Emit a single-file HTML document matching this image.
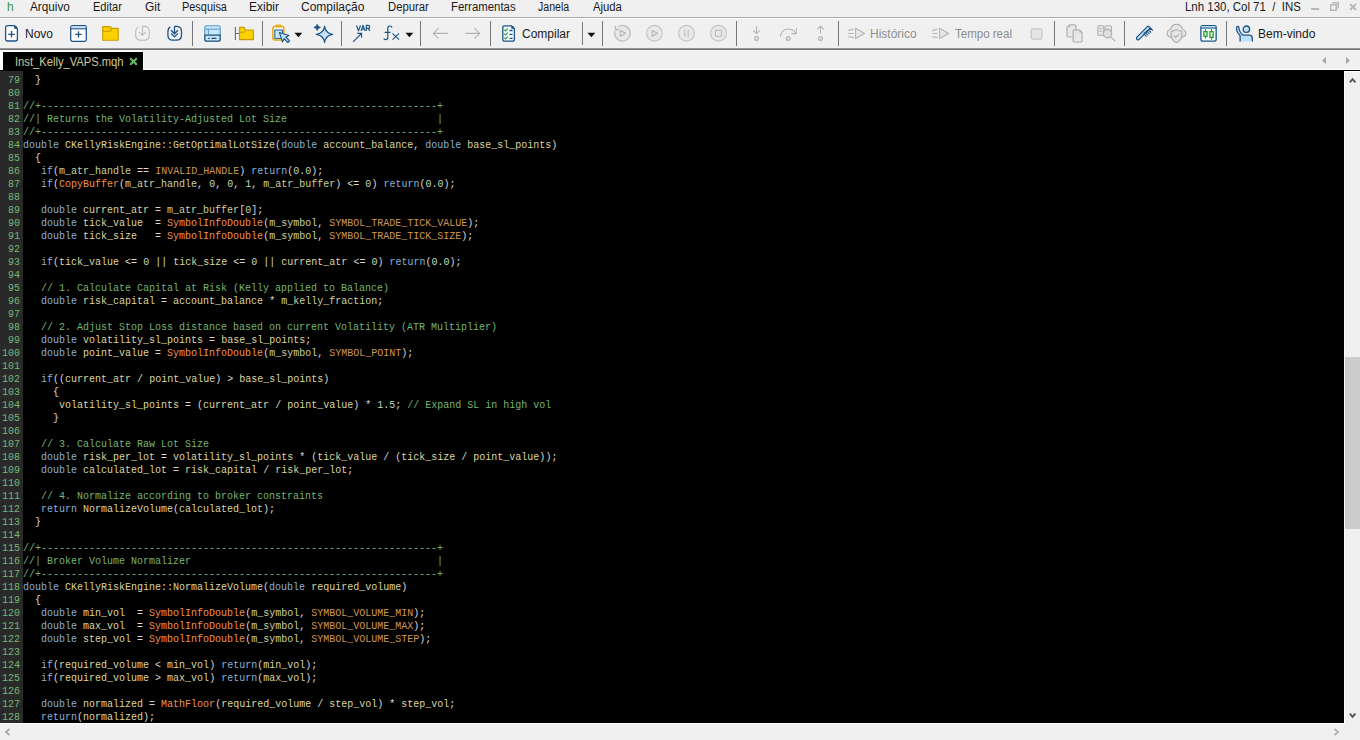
<!DOCTYPE html>
<html><head><meta charset="utf-8">
<style>
*{margin:0;padding:0;box-sizing:border-box}
html,body{width:1360px;height:740px;overflow:hidden;background:#f0f0f0;font-family:"Liberation Sans",sans-serif}
.a{position:absolute}
.t{position:absolute;font-size:12px;line-height:14px;color:#1a1a1a;white-space:pre}
.sep{position:absolute;top:21px;width:1px;height:25px;background:#767676}
svg{position:absolute;overflow:visible}
#ed{position:absolute;left:0;top:70px;width:1344px;height:653px;background:#000;overflow:hidden}
#gut{position:absolute;left:0;top:71px;width:23px;height:652px;background:#2a292a}
.ln,.gn{position:absolute;font-family:"Liberation Mono",monospace;font-size:10px;line-height:13px;white-space:pre}
.ln{left:23px}
.gn{left:0;width:20px;text-align:right;color:#76b676}
i{font-style:normal}
.k{color:#86b2dc}
.f{color:#f09448}
.n{color:#d09852}
.v{color:#dcd6a2}
.m{color:#cad2a0}
.d{color:#bcdcc0}
.p{color:#d8d8d8}
.c{color:#74b474}
</style></head><body>
<!-- menu bar -->
<div class="a" style="left:0;top:17px;width:1360px;height:1px;background:#a8a8a8"></div>
<div class="a" style="left:0;top:18px;width:1360px;height:1px;background:#fff"></div>
<div class="t" style="left:7px;top:0;color:#3a9a3a">h</div>
<div class="t" style="left:29.5px;top:0;transform:scaleX(0.98);transform-origin:0 0">Arquivo</div>
<div class="t" style="left:93px;top:0;transform:scaleX(0.92);transform-origin:0 0">Editar</div>
<div class="t" style="left:145px;top:0">Git</div>
<div class="t" style="left:182px;top:0;transform:scaleX(0.91);transform-origin:0 0">Pesquisa</div>
<div class="t" style="left:249px;top:0">Exibir</div>
<div class="t" style="left:301px;top:0">Compilação</div>
<div class="t" style="left:387.5px;top:0;transform:scaleX(0.94);transform-origin:0 0">Depurar</div>
<div class="t" style="left:451px;top:0;transform:scaleX(0.95);transform-origin:0 0">Ferramentas</div>
<div class="t" style="left:538px;top:0;transform:scaleX(0.88);transform-origin:0 0">Janela</div>
<div class="t" style="left:592.5px;top:0;transform:scaleX(0.94);transform-origin:0 0">Ajuda</div>
<div class="t" style="left:1185px;top:0;transform:scaleX(0.954);transform-origin:0 0">Lnh 130, Col 71  /  INS</div>
<!-- window controls -->
<div class="a" style="left:1311px;top:8px;width:8px;height:2px;background:#b8b8b8"></div>
<svg style="left:1330px;top:2px" width="9" height="9"><rect x="0.75" y="2.75" width="5.5" height="5.5" fill="none" stroke="#b8b8b8" stroke-width="1.5"/><path d="M2.5 0.75H8.25V6.5" fill="none" stroke="#b8b8b8" stroke-width="1.5"/></svg>
<svg style="left:1349px;top:3px" width="8" height="8"><path d="M1 1L7 7M7 1L1 7" stroke="#b8b8b8" stroke-width="1.8"/></svg>

<!-- toolbar -->
<div class="a" style="left:0;top:48px;width:1360px;height:1px;background:#999"></div>
<div class="a" style="left:0;top:49px;width:1360px;height:1px;background:#6e6e6e"></div>
<div class="a" style="left:0;top:50px;width:1360px;height:1px;background:#fafafa"></div>
<div class="a" style="left:0;top:51px;width:144px;height:1px;background:#fff"></div>
<!-- new file -->
<svg style="left:4px;top:24px" width="16" height="19" viewBox="0 0 16 19"><path d="M3.6 1.6H10.2L13.4 4.8V15Q13.4 17 11.4 17H3.6Q1.6 17 1.6 15V3.6Q1.6 1.6 3.6 1.6Z" fill="#fff" stroke="#1d5487" stroke-width="1.3"/><path d="M10 1.6Q13.4 1.6 13.4 5L10.3 4.8Z" fill="#1d5487"/><path d="M7.5 7V13.6M4.2 10.3H10.8" stroke="#1d5487" stroke-width="1.3"/></svg>
<!-- new window -->
<svg style="left:69px;top:24px" width="19" height="19" viewBox="0 0 19 19"><rect x="1.7" y="1.7" width="15.6" height="15.6" rx="1.8" fill="#fff" stroke="#1d5487" stroke-width="1.3"/><path d="M2.3 2.6H16.7V4.2H2.3Z" fill="#bfe0f8"/><path d="M1.7 4.8H17.3" stroke="#1d5487" stroke-width="1.1"/><path d="M9.5 7.2V13.6M6.3 10.4H12.7" stroke="#1d5487" stroke-width="1.3"/></svg>
<!-- folder -->
<svg style="left:101px;top:25px" width="20" height="17" viewBox="0 0 20 17"><path d="M1.7 1.6H8.4Q10.3 1.6 10.3 3.4H17.2V15.2H1.7Z" fill="#fdd000" stroke="#c69a00" stroke-width="1.1" stroke-linejoin="round"/><path d="M1.7 6.3H8.4Q10.3 6.3 10.3 4.6V3.4" fill="none" stroke="#c69a00" stroke-width="1.1"/></svg>
<!-- download disabled -->
<svg style="left:134px;top:25px" width="18" height="17" viewBox="0 0 18 17"><path d="M4 1.9Q1.7 3.3 1.7 7V10Q1.7 15.2 6.7 15.2H10.3Q15.3 15.2 15.3 10V6.5Q15.3 1.4 10.3 1.4H8.5V10.3M5.1 7L8.5 10.4L11.9 7" fill="none" stroke="#bdbdbd" stroke-width="1.1" stroke-linejoin="round"/></svg>
<!-- download blue -->
<svg style="left:166px;top:25px" width="18" height="17" viewBox="0 0 18 17"><path d="M4.3 1.9Q1.9 3.3 1.9 7V10Q1.9 15.2 6.9 15.2H10.3Q15.5 15.2 15.5 10V6.5Q15.5 1.4 10.3 1.4H8.5V8.5M5 5.3L8.5 8.7L12 5.3M5 8.4L8.5 11.8L12 8.4" fill="none" stroke="#1d5487" stroke-width="1.3" stroke-linejoin="round"/></svg>
<div class="sep" style="left:192px"></div>
<!-- panel -->
<svg style="left:203px;top:24px" width="19" height="19" viewBox="0 0 19 19"><path d="M1.8 11.2V3.6Q1.8 1.7 3.7 1.7H15.3Q17.2 1.7 17.2 3.6V11.2" fill="#c6e6fb" stroke="#5a9acb" stroke-width="1.1"/><path d="M1.8 11.2V15.3Q1.8 17.2 3.7 17.2H15.3Q17.2 17.2 17.2 15.3V11.2Z" fill="#c6e6fb" stroke="#1e4f7a" stroke-width="1.3"/><path d="M1.8 5.2H17.2M5.4 5.2V11" stroke="#5a9acb" stroke-width="1"/><path d="M5.2 14.4H6.6M8.4 14.4H13.4" stroke="#1e4f7a" stroke-width="1.3"/></svg>
<!-- folder with tree -->
<svg style="left:233px;top:25px" width="22" height="17" viewBox="0 0 22 17"><path d="M2.4 2V15M2.4 8.5H6.5" stroke="#6a6a7a" stroke-width="1.1"/><path d="M6.6 2.4H10.3Q12 2.4 12 4.3V5H20.4V14.6H6.6Z" fill="#fdd000" stroke="#c69a00" stroke-width="1.1"/><path d="M6.6 7.3H10.6Q12 7.3 12 5.5" fill="none" stroke="#c69a00" stroke-width="1.1"/></svg>
<div class="sep" style="left:262px"></div>
<!-- clipboard + cursor -->
<svg style="left:271px;top:24px" width="22" height="20" viewBox="0 0 22 20"><rect x="1.9" y="2.6" width="11" height="13.3" rx="1.8" fill="#f5f5f5" stroke="#e5aa10" stroke-width="1.5"/><path d="M4.6 2.8V2Q4.6 1.1 5.5 1.1H9.3Q10.2 1.1 10.2 2V2.8Z" fill="#f5c030" stroke="#e5aa10" stroke-width="1"/><rect x="3.8" y="6" width="7.6" height="8.4" fill="#c2e2f8" stroke="#1d5487" stroke-width="0.9"/><path d="M8.4 8.4L18 11.4L14.8 13L18.6 16.8L16.9 18.5L13.1 14.7L11.5 17.9Z" fill="#c2e2f8" stroke="#1d5487" stroke-width="1.1" stroke-linejoin="round"/></svg>
<svg style="left:294px;top:32px" width="9" height="6"><path d="M0.5 0.8H8.3L4.4 5.2Z" fill="#111"/></svg>
<!-- sparkle -->
<svg style="left:313px;top:23px" width="21" height="21" viewBox="0 0 21 21"><path d="M11.6 3.4Q12.5 10.4 19.7 11.4Q12.5 12.5 11.6 19.5Q10.7 12.5 3.2 11.4Q10.7 10.4 11.6 3.4Z" fill="#c2e2f8" stroke="#1d5487" stroke-width="1.25" stroke-linejoin="round"/><path d="M4.2 1.2Q4.6 3.9 7.5 4.4Q4.6 4.9 4.2 7.6Q3.8 4.9 0.9 4.4Q3.8 3.9 4.2 1.2Z" fill="#1d5487" stroke="#1d5487" stroke-width="0.7" stroke-linejoin="round"/></svg>
<div class="sep" style="left:341px"></div>
<!-- VAR + fx -->
<svg style="left:344px;top:20px" width="62" height="26" viewBox="0 0 62 26"><path d="M12.5 5.4L14.5 10.9L16.5 5.4M17 10.9L19 5.4L21 10.9M17.8 9.2H20.2M22.3 10.9V5.4H24.2Q25.7 5.4 25.7 6.9Q25.7 8.3 24.2 8.3H22.3M24.2 8.3L25.9 10.9" fill="none" stroke="#1d5487" stroke-width="1.2" stroke-linejoin="round"/><path d="M9.1 21.8L17.5 13.5M13.2 13.4H17.6V17.7" fill="none" stroke="#1d5487" stroke-width="1.1"/><path d="M48 7.6Q47.6 6 46 6Q43.8 6 43.8 8.6V17.3Q43.8 19.6 41.7 19.6Q40.2 19.6 39.6 18.5M40.6 12.4H46.5" fill="none" stroke="#1d5487" stroke-width="1.2"/><path d="M48.5 13.4L55 19.7M55 13.4L48.5 19.7" stroke="#1d5487" stroke-width="1.1"/></svg>
<svg style="left:405px;top:32px" width="9" height="6"><path d="M0.5 0.8H8.3L4.4 5.2Z" fill="#111"/></svg>
<div class="sep" style="left:420px"></div>
<!-- arrows -->
<svg style="left:432px;top:27px" width="17" height="13" viewBox="0 0 17 13"><path d="M15.8 6.4H1.5M6.6 1.1L1.3 6.4L6.6 11.7" fill="none" stroke="#b3b3b3" stroke-width="1.1"/></svg>
<svg style="left:464px;top:27px" width="17" height="13" viewBox="0 0 17 13"><path d="M1.2 6.4H15.5M10.4 1.1L15.7 6.4L10.4 11.7" fill="none" stroke="#b3b3b3" stroke-width="1.1"/></svg>
<div class="sep" style="left:490px"></div>
<!-- compile -->
<svg style="left:501px;top:24px" width="16" height="19" viewBox="0 0 16 19"><path d="M3.6 1.8H10.4L13.4 4.8V15.2Q13.4 17.2 11.4 17.2H3.6Q1.8 17.2 1.8 15.2V3.8Q1.8 1.8 3.6 1.8Z" fill="#f4fbff" stroke="#1d5487" stroke-width="1.3"/><path d="M10.2 1.8Q13.4 1.8 13.4 5L10.4 4.8Z" fill="#1d5487"/><path d="M3.2 5.6L4.6 7L6.8 4.6M3.2 9.6L4.6 11L6.8 8.6M3.2 13.6L4.6 15L6.8 12.6" fill="none" stroke="#3c9c48" stroke-width="1.2"/><path d="M8.5 6.5H11.6M8.5 10.4H11.6M8.5 14.4H11.6" stroke="#1d5487" stroke-width="1.3"/></svg>
<div class="sep" style="left:582px;top:22px;height:23px;background:#7a7a7a"></div>
<svg style="left:587px;top:32px" width="9" height="6"><path d="M0.5 0.8H8.3L4.4 5.2Z" fill="#111"/></svg>
<div class="sep" style="left:602px"></div>
<!-- debug circles -->
<svg style="left:612px;top:23px" width="21" height="21" viewBox="0 0 21 21"><circle cx="10.5" cy="10.25" r="7.8" fill="#e8e8e8"/><path d="M6.03 3.86A7.8 7.8 0 1 1 2.97 8.23" fill="none" stroke="#bdbdbd" stroke-width="1.2"/><path d="M3.4 3V6.5H6.9" fill="none" stroke="#b5b5b5" stroke-width="1.3"/><path d="M8.3 7.4V13.3L13.6 10.3Z" fill="none" stroke="#b5b5b5" stroke-width="1.1" stroke-linejoin="round"/></svg>
<svg style="left:644px;top:23px" width="21" height="21" viewBox="0 0 21 21"><circle cx="10.4" cy="10.3" r="7.9" fill="#e8e8e8" stroke="#c6c6c6" stroke-width="1.2"/><path d="M8.2 7.4V13.3L13.5 10.3Z" fill="none" stroke="#b5b5b5" stroke-width="1.1" stroke-linejoin="round"/></svg>
<svg style="left:676px;top:23px" width="21" height="21" viewBox="0 0 21 21"><circle cx="10.5" cy="10.3" r="7.9" fill="#e8e8e8" stroke="#c6c6c6" stroke-width="1.2"/><path d="M8.8 6.8V13.8M12.2 6.8V13.8" stroke="#bdbdbd" stroke-width="1.1"/></svg>
<svg style="left:708px;top:23px" width="21" height="21" viewBox="0 0 21 21"><circle cx="10.5" cy="10.3" r="7.9" fill="#e8e8e8" stroke="#c6c6c6" stroke-width="1.2"/><rect x="7.5" y="7.3" width="6" height="6" fill="none" stroke="#bdbdbd" stroke-width="1.1"/></svg>
<div class="sep" style="left:736px"></div>
<!-- step into/over/out -->
<svg style="left:748px;top:24px" width="17" height="19" viewBox="0 0 17 19"><path d="M8.5 2V9.5M5.3 6.5L8.5 9.6L11.7 6.5" fill="none" stroke="#b5b5b5" stroke-width="1.1"/><circle cx="8.5" cy="14.5" r="1.9" fill="#e6e6e6" stroke="#b5b5b5" stroke-width="1.2"/></svg>
<svg style="left:778px;top:24px" width="21" height="19" viewBox="0 0 21 19"><path d="M2.2 12.5Q4 5 10 5Q15 5 17.7 9M18.3 4.3V9.6H13.3" fill="none" stroke="#b5b5b5" stroke-width="1.1"/><circle cx="10.3" cy="14.5" r="1.9" fill="#e6e6e6" stroke="#b5b5b5" stroke-width="1.2"/></svg>
<svg style="left:812px;top:24px" width="17" height="19" viewBox="0 0 17 19"><path d="M8.5 9.7V2.2M5.3 5.3L8.5 2.1L11.7 5.3" fill="none" stroke="#b5b5b5" stroke-width="1.1"/><circle cx="8.5" cy="14.5" r="1.9" fill="#e6e6e6" stroke="#b5b5b5" stroke-width="1.2"/></svg>
<div class="sep" style="left:838px"></div>
<!-- historico / tempo real icons -->
<svg style="left:847px;top:27px" width="19" height="13" viewBox="0 0 19 13"><path d="M1.2 3.6L6.6 2.1M1.2 6.5H6.6M1.2 9.6L6.6 10.6" stroke="#b8b8b8" stroke-width="1.1"/><path d="M8.6 1.3V11.5L17.6 6.4Z" fill="#e6e6e6" stroke="#b5b5b5" stroke-width="1.1" stroke-linejoin="round"/></svg>
<svg style="left:931px;top:27px" width="19" height="13" viewBox="0 0 19 13"><path d="M1.2 3.6L6.6 2.1M1.2 6.5H6.6M1.2 9.6L6.6 10.6" stroke="#b8b8b8" stroke-width="1.1"/><path d="M8.6 1.3V11.5L17.6 6.4Z" fill="#e6e6e6" stroke="#b5b5b5" stroke-width="1.1" stroke-linejoin="round"/></svg>
<svg style="left:1030px;top:28px" width="13" height="12" viewBox="0 0 13 12"><rect x="1.2" y="0.8" width="10.6" height="10.3" rx="1.5" fill="#e4e4e4" stroke="#c6c6c6" stroke-width="1.2"/></svg>
<div class="sep" style="left:1054px"></div>
<!-- copy docs -->
<svg style="left:1065px;top:23px" width="20" height="21" viewBox="0 0 20 21"><path d="M4.6 1.8H9.6Q10.9 1.8 10.9 3.1V12.7Q10.9 14 9.6 14H3.3Q2 14 2 12.7V4.4Z" fill="#e8e8e8" stroke="#b0b0b0" stroke-width="1.2" stroke-linejoin="round"/><path d="M4.6 1.8V4.4H2Z" fill="#b0b0b0"/><path d="M9.4 6.8H14.4L17 9.4V17.7Q17 19 15.7 19H9.4Q8.1 19 8.1 17.7V8.1Q8.1 6.8 9.4 6.8Z" fill="#e8e8e8" fill-opacity="0.85" stroke="#b0b0b0" stroke-width="1.2" stroke-linejoin="round"/><path d="M14.4 6.8V9.4H17Z" fill="#b0b0b0"/></svg>
<!-- search -->
<svg style="left:1096px;top:24px" width="21" height="19" viewBox="0 0 21 19"><rect x="1.8" y="1.8" width="6" height="9.4" rx="1" fill="#e8e8e8" stroke="#b0b0b0" stroke-width="1.1"/><rect x="9" y="1.8" width="6.4" height="5.8" rx="1" fill="#e8e8e8" stroke="#b0b0b0" stroke-width="1.1"/><path d="M3.2 4.6H5.8M3.2 7.3H5.8" stroke="#b0b0b0" stroke-width="1"/><circle cx="11.5" cy="9.6" r="4.2" fill="#e0e0e0" stroke="#b0b0b0" stroke-width="1.2"/><path d="M14.5 12.6L19.3 17.4" stroke="#b0b0b0" stroke-width="1.1"/></svg>
<div class="sep" style="left:1124px"></div>
<!-- comb -->
<svg style="left:1135px;top:25px" width="19" height="16" viewBox="0 0 19 16"><path d="M1.6 12.4L12.6 1.4Q13.1 0.9 13.6 1.4L15.4 3.2L3.9 14.6Q2.9 15.3 2 14.5Q1.1 13.4 1.6 12.4Z" fill="#b8e0fb" stroke="#1d4f7c" stroke-width="1.2" stroke-linejoin="round"/><path d="M8.6 8.8L15.6 3.3L17.8 5.5M9.6 9.6L11.6 11.6M11.1 8.3L13.1 10.1M12.6 7.1L14.6 8.9M14.1 5.9L16.2 7.5" fill="none" stroke="#1d4f7c" stroke-width="1.1"/></svg>
<!-- cloud shield -->
<svg style="left:1166px;top:23px" width="21" height="21" viewBox="0 0 21 21"><path d="M6 14.3Q1.2 14.3 1.2 10.3Q1.2 7 4.6 6.5Q5.5 1.4 10.5 1.4Q15.5 1.4 16.4 6.5Q19.8 7 19.8 10.3Q19.8 14.3 15 14.3" fill="#e6e6e6" stroke="#b0b0b0" stroke-width="1.2"/><path d="M10.5 6.8L15.8 8.6V12.5Q15.8 17.3 10.5 19.6Q5.2 17.3 5.2 12.5V8.6Z" fill="#e6e6e6" stroke="#b0b0b0" stroke-width="1.2"/><path d="M7.8 12.5L9.8 14.5L13.3 10.9" fill="none" stroke="#b0b0b0" stroke-width="1.2"/></svg>
<!-- candles -->
<svg style="left:1199px;top:24px" width="19" height="19" viewBox="0 0 19 19"><rect x="1.9" y="1.65" width="15.25" height="15.5" rx="1.6" fill="#f4fcff" stroke="#1d5487" stroke-width="1.3"/><path d="M2.5 2.3H16.5V3.5H2.5Z" fill="#bfe6f8"/><path d="M1.9 4H17.15" stroke="#1d5487" stroke-width="1.1"/><path d="M6.5 5.1V14.6M12.55 5.1V15.8" stroke="#2a9a2a" stroke-width="1.1"/><rect x="4.9" y="7.6" width="3.2" height="4.7" fill="#c8f6c8" stroke="#2a9a2a" stroke-width="1.2"/><rect x="10.9" y="7.6" width="3.3" height="5.8" fill="#c8f6c8" stroke="#2a9a2a" stroke-width="1.2"/></svg>
<div class="sep" style="left:1226px"></div>
<!-- person waving -->
<svg style="left:1235px;top:24px" width="20" height="19" viewBox="0 0 20 19"><path d="M5.1 17.6V11.5Q1.3 8.3 1.5 3.6Q1.9 2 3.6 2.5Q4.6 9.4 8.2 11.1H14.3Q17.3 11.1 17.3 14V17.6Z" fill="#bfe0f8"/><path d="M5.1 17.6V11.5Q1.3 8.3 1.5 3.6Q1.9 2 3.6 2.5Q4.6 9.4 8.2 11.1H14.3Q17.3 11.1 17.3 14V17.6" fill="none" stroke="#1d5487" stroke-width="1.3" stroke-linejoin="round"/><circle cx="11.4" cy="5.2" r="3.2" fill="#bfe0f8" stroke="#1d5487" stroke-width="1.3"/></svg>

<div class="t" style="left:25px;top:27px">Novo</div>
<div class="t" style="left:522px;top:27px">Compilar</div>
<div class="t" style="left:870px;top:27px;color:#8e8e8e">Histórico</div>
<div class="t" style="left:955px;top:27px;color:#8e8e8e;transform:scaleX(0.96);transform-origin:0 0">Tempo real</div>
<div class="t" style="left:1258px;top:27px">Bem-vindo</div>

<!-- tab strip -->
<div class="a" style="left:0;top:52px;width:3px;height:18px;background:#fff"></div>
<div class="a" style="left:3px;top:52px;width:140px;height:18px;background:#000"></div>
<div class="a" style="left:143px;top:52px;width:1px;height:18px;background:#fff"></div>
<div class="a" style="left:144px;top:69px;width:1216px;height:1px;background:#fff"></div>
<div class="t" style="left:14.5px;top:54px;font-size:13px;line-height:15px;color:#cdc998;transform:scaleX(0.86);transform-origin:0 0">Inst_Kelly_VAPS.mqh</div>
<svg style="left:128.5px;top:56.5px" width="9" height="9"><path d="M1.2 1.2L7.8 7.8M7.8 1.2L1.2 7.8" stroke="#6cb86c" stroke-width="2.1"/></svg>
<svg style="left:1322px;top:57px" width="5" height="7"><path d="M4 0L0 3.5L4 7Z" fill="#a8a8a8"/></svg>
<svg style="left:1346px;top:57px" width="5" height="7"><path d="M0 0L4 3.5L0 7Z" fill="#a8a8a8"/></svg>

<!-- editor -->
<div id="ed"></div>
<div id="gut"></div>
<div class="gn" style="top:74px">79</div>
<div class="gn" style="top:87px">80</div>
<div class="gn" style="top:100px">81</div>
<div class="gn" style="top:113px">82</div>
<div class="gn" style="top:126px">83</div>
<div class="gn" style="top:139px">84</div>
<div class="gn" style="top:152px">85</div>
<div class="gn" style="top:165px">86</div>
<div class="gn" style="top:178px">87</div>
<div class="gn" style="top:191px">88</div>
<div class="gn" style="top:204px">89</div>
<div class="gn" style="top:217px">90</div>
<div class="gn" style="top:230px">91</div>
<div class="gn" style="top:243px">92</div>
<div class="gn" style="top:256px">93</div>
<div class="gn" style="top:269px">94</div>
<div class="gn" style="top:282px">95</div>
<div class="gn" style="top:295px">96</div>
<div class="gn" style="top:308px">97</div>
<div class="gn" style="top:321px">98</div>
<div class="gn" style="top:334px">99</div>
<div class="gn" style="top:347px">100</div>
<div class="gn" style="top:360px">101</div>
<div class="gn" style="top:373px">102</div>
<div class="gn" style="top:386px">103</div>
<div class="gn" style="top:399px">104</div>
<div class="gn" style="top:412px">105</div>
<div class="gn" style="top:425px">106</div>
<div class="gn" style="top:438px">107</div>
<div class="gn" style="top:451px">108</div>
<div class="gn" style="top:464px">109</div>
<div class="gn" style="top:477px">110</div>
<div class="gn" style="top:490px">111</div>
<div class="gn" style="top:503px">112</div>
<div class="gn" style="top:516px">113</div>
<div class="gn" style="top:529px">114</div>
<div class="gn" style="top:542px">115</div>
<div class="gn" style="top:555px">116</div>
<div class="gn" style="top:568px">117</div>
<div class="gn" style="top:581px">118</div>
<div class="gn" style="top:594px">119</div>
<div class="gn" style="top:607px">120</div>
<div class="gn" style="top:620px">121</div>
<div class="gn" style="top:633px">122</div>
<div class="gn" style="top:646px">123</div>
<div class="gn" style="top:659px">124</div>
<div class="gn" style="top:672px">125</div>
<div class="gn" style="top:685px">126</div>
<div class="gn" style="top:698px">127</div>
<div class="gn" style="top:711px">128</div>
<div class="ln" style="top:74px">  <i class="p">}</i></div>
<div class="ln" style="top:87px"></div>
<div class="ln" style="top:100px"><i class="c">//+------------------------------------------------------------------+</i></div>
<div class="ln" style="top:113px"><i class="c">//| Returns the Volatility-Adjusted Lot Size                         |</i></div>
<div class="ln" style="top:126px"><i class="c">//+------------------------------------------------------------------+</i></div>
<div class="ln" style="top:139px"><i class="k">double</i> <i class="v">CKellyRiskEngine</i><i class="p">:</i><i class="p">:</i><i class="v">GetOptimalLotSize</i><i class="p">(</i><i class="k">double</i> <i class="v">account_balance</i><i class="p">,</i> <i class="k">double</i> <i class="v">base_sl_points</i><i class="p">)</i></div>
<div class="ln" style="top:152px">  <i class="p">{</i></div>
<div class="ln" style="top:165px">   <i class="k">if</i><i class="p">(</i><i class="m">m_atr_handle</i> <i class="p">=</i><i class="p">=</i> <i class="n">INVALID_HANDLE</i><i class="p">)</i> <i class="k">return</i><i class="p">(</i><i class="d">0.0</i><i class="p">)</i><i class="p">;</i></div>
<div class="ln" style="top:178px">   <i class="k">if</i><i class="p">(</i><i class="f">CopyBuffer</i><i class="p">(</i><i class="m">m_atr_handle</i><i class="p">,</i> <i class="d">0</i><i class="p">,</i> <i class="d">0</i><i class="p">,</i> <i class="d">1</i><i class="p">,</i> <i class="m">m_atr_buffer</i><i class="p">)</i> <i class="p">&lt;</i><i class="p">=</i> <i class="d">0</i><i class="p">)</i> <i class="k">return</i><i class="p">(</i><i class="d">0.0</i><i class="p">)</i><i class="p">;</i></div>
<div class="ln" style="top:191px"></div>
<div class="ln" style="top:204px">   <i class="k">double</i> <i class="v">current_atr</i> <i class="p">=</i> <i class="m">m_atr_buffer</i><i class="p">[</i><i class="d">0</i><i class="p">]</i><i class="p">;</i></div>
<div class="ln" style="top:217px">   <i class="k">double</i> <i class="v">tick_value</i>  <i class="p">=</i> <i class="f">SymbolInfoDouble</i><i class="p">(</i><i class="m">m_symbol</i><i class="p">,</i> <i class="n">SYMBOL_TRADE_TICK_VALUE</i><i class="p">)</i><i class="p">;</i></div>
<div class="ln" style="top:230px">   <i class="k">double</i> <i class="v">tick_size</i>   <i class="p">=</i> <i class="f">SymbolInfoDouble</i><i class="p">(</i><i class="m">m_symbol</i><i class="p">,</i> <i class="n">SYMBOL_TRADE_TICK_SIZE</i><i class="p">)</i><i class="p">;</i></div>
<div class="ln" style="top:243px"></div>
<div class="ln" style="top:256px">   <i class="k">if</i><i class="p">(</i><i class="v">tick_value</i> <i class="p">&lt;</i><i class="p">=</i> <i class="d">0</i> <i class="p">|</i><i class="p">|</i> <i class="v">tick_size</i> <i class="p">&lt;</i><i class="p">=</i> <i class="d">0</i> <i class="p">|</i><i class="p">|</i> <i class="v">current_atr</i> <i class="p">&lt;</i><i class="p">=</i> <i class="d">0</i><i class="p">)</i> <i class="k">return</i><i class="p">(</i><i class="d">0.0</i><i class="p">)</i><i class="p">;</i></div>
<div class="ln" style="top:269px"></div>
<div class="ln" style="top:282px">   <i class="c">// 1. Calculate Capital at Risk (Kelly applied to Balance)</i></div>
<div class="ln" style="top:295px">   <i class="k">double</i> <i class="v">risk_capital</i> <i class="p">=</i> <i class="v">account_balance</i> <i class="p">*</i> <i class="m">m_kelly_fraction</i><i class="p">;</i></div>
<div class="ln" style="top:308px"></div>
<div class="ln" style="top:321px">   <i class="c">// 2. Adjust Stop Loss distance based on current Volatility (ATR Multiplier)</i></div>
<div class="ln" style="top:334px">   <i class="k">double</i> <i class="v">volatility_sl_points</i> <i class="p">=</i> <i class="v">base_sl_points</i><i class="p">;</i></div>
<div class="ln" style="top:347px">   <i class="k">double</i> <i class="v">point_value</i> <i class="p">=</i> <i class="f">SymbolInfoDouble</i><i class="p">(</i><i class="m">m_symbol</i><i class="p">,</i> <i class="n">SYMBOL_POINT</i><i class="p">)</i><i class="p">;</i></div>
<div class="ln" style="top:360px"></div>
<div class="ln" style="top:373px">   <i class="k">if</i><i class="p">(</i><i class="p">(</i><i class="v">current_atr</i> <i class="p">/</i> <i class="v">point_value</i><i class="p">)</i> <i class="p">&gt;</i> <i class="v">base_sl_points</i><i class="p">)</i></div>
<div class="ln" style="top:386px">     <i class="p">{</i></div>
<div class="ln" style="top:399px">      <i class="v">volatility_sl_points</i> <i class="p">=</i> <i class="p">(</i><i class="v">current_atr</i> <i class="p">/</i> <i class="v">point_value</i><i class="p">)</i> <i class="p">*</i> <i class="d">1.5</i><i class="p">;</i> <i class="c">// Expand SL in high vol</i></div>
<div class="ln" style="top:412px">     <i class="p">}</i></div>
<div class="ln" style="top:425px"></div>
<div class="ln" style="top:438px">   <i class="c">// 3. Calculate Raw Lot Size</i></div>
<div class="ln" style="top:451px">   <i class="k">double</i> <i class="v">risk_per_lot</i> <i class="p">=</i> <i class="v">volatility_sl_points</i> <i class="p">*</i> <i class="p">(</i><i class="v">tick_value</i> <i class="p">/</i> <i class="p">(</i><i class="v">tick_size</i> <i class="p">/</i> <i class="v">point_value</i><i class="p">)</i><i class="p">)</i><i class="p">;</i></div>
<div class="ln" style="top:464px">   <i class="k">double</i> <i class="v">calculated_lot</i> <i class="p">=</i> <i class="v">risk_capital</i> <i class="p">/</i> <i class="v">risk_per_lot</i><i class="p">;</i></div>
<div class="ln" style="top:477px"></div>
<div class="ln" style="top:490px">   <i class="c">// 4. Normalize according to broker constraints</i></div>
<div class="ln" style="top:503px">   <i class="k">return</i> <i class="v">NormalizeVolume</i><i class="p">(</i><i class="v">calculated_lot</i><i class="p">)</i><i class="p">;</i></div>
<div class="ln" style="top:516px">  <i class="p">}</i></div>
<div class="ln" style="top:529px"></div>
<div class="ln" style="top:542px"><i class="c">//+------------------------------------------------------------------+</i></div>
<div class="ln" style="top:555px"><i class="c">//| Broker Volume Normalizer                                         |</i></div>
<div class="ln" style="top:568px"><i class="c">//+------------------------------------------------------------------+</i></div>
<div class="ln" style="top:581px"><i class="k">double</i> <i class="v">CKellyRiskEngine</i><i class="p">:</i><i class="p">:</i><i class="v">NormalizeVolume</i><i class="p">(</i><i class="k">double</i> <i class="v">required_volume</i><i class="p">)</i></div>
<div class="ln" style="top:594px">  <i class="p">{</i></div>
<div class="ln" style="top:607px">   <i class="k">double</i> <i class="v">min_vol</i>  <i class="p">=</i> <i class="f">SymbolInfoDouble</i><i class="p">(</i><i class="m">m_symbol</i><i class="p">,</i> <i class="n">SYMBOL_VOLUME_MIN</i><i class="p">)</i><i class="p">;</i></div>
<div class="ln" style="top:620px">   <i class="k">double</i> <i class="v">max_vol</i>  <i class="p">=</i> <i class="f">SymbolInfoDouble</i><i class="p">(</i><i class="m">m_symbol</i><i class="p">,</i> <i class="n">SYMBOL_VOLUME_MAX</i><i class="p">)</i><i class="p">;</i></div>
<div class="ln" style="top:633px">   <i class="k">double</i> <i class="v">step_vol</i> <i class="p">=</i> <i class="f">SymbolInfoDouble</i><i class="p">(</i><i class="m">m_symbol</i><i class="p">,</i> <i class="n">SYMBOL_VOLUME_STEP</i><i class="p">)</i><i class="p">;</i></div>
<div class="ln" style="top:646px"></div>
<div class="ln" style="top:659px">   <i class="k">if</i><i class="p">(</i><i class="v">required_volume</i> <i class="p">&lt;</i> <i class="v">min_vol</i><i class="p">)</i> <i class="k">return</i><i class="p">(</i><i class="v">min_vol</i><i class="p">)</i><i class="p">;</i></div>
<div class="ln" style="top:672px">   <i class="k">if</i><i class="p">(</i><i class="v">required_volume</i> <i class="p">&gt;</i> <i class="v">max_vol</i><i class="p">)</i> <i class="k">return</i><i class="p">(</i><i class="v">max_vol</i><i class="p">)</i><i class="p">;</i></div>
<div class="ln" style="top:685px"></div>
<div class="ln" style="top:698px">   <i class="k">double</i> <i class="v">normalized</i> <i class="p">=</i> <i class="f">MathFloor</i><i class="p">(</i><i class="v">required_volume</i> <i class="p">/</i> <i class="v">step_vol</i><i class="p">)</i> <i class="p">*</i> <i class="v">step_vol</i><i class="p">;</i></div>
<div class="ln" style="top:711px">   <i class="k">return</i><i class="p">(</i><i class="v">normalized</i><i class="p">)</i><i class="p">;</i></div>

<!-- vertical scrollbar -->
<div class="a" style="left:1344px;top:70px;width:16px;height:1px;background:#000"></div>
<div class="a" style="left:1344px;top:71px;width:1px;height:653px;background:#fff"></div>
<div class="a" style="left:1344px;top:71px;width:16px;height:1px;background:#fff"></div>
<div class="a" style="left:1345px;top:357px;width:15px;height:172px;background:#cdcdcd"></div>
<svg style="left:1349px;top:77px" width="8" height="7"><path d="M0.8 5.4L3.6 2.2L6.4 5.4" fill="none" stroke="#555" stroke-width="1.9"/></svg>
<svg style="left:1349px;top:712px" width="8" height="7"><path d="M0.8 1.6L3.6 4.8L6.4 1.6" fill="none" stroke="#555" stroke-width="1.9"/></svg>
<!-- horizontal scrollbar -->
<div class="a" style="left:0;top:723px;width:1345px;height:1px;background:#fff"></div>
<svg style="left:4px;top:728px" width="7" height="8"><path d="M5.5 0.8L2 4L5.5 7.2" fill="none" stroke="#a8a8a8" stroke-width="1.8"/></svg>
<svg style="left:1333px;top:728px" width="7" height="8"><path d="M1.5 0.8L5 4L1.5 7.2" fill="none" stroke="#b0b0b0" stroke-width="1.8"/></svg>
</body></html>
